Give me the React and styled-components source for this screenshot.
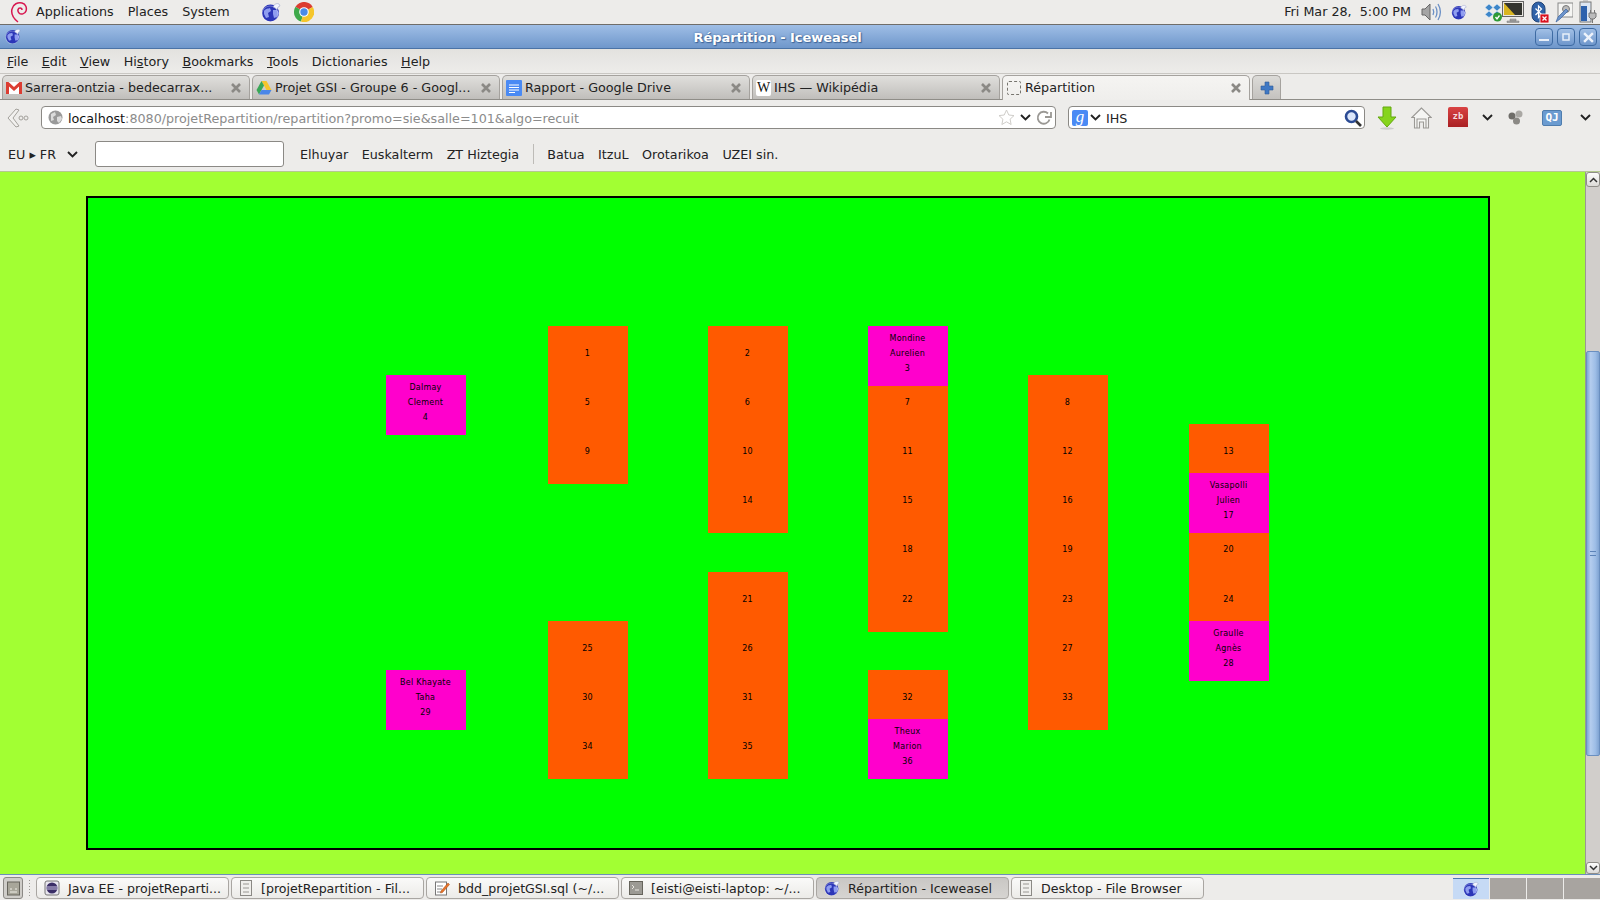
import React from "react";
import styled, { createGlobalStyle } from "styled-components";

const Global = createGlobalStyle`
  html, body { margin: 0; padding: 0; background: #edecea; }
  body { font-family: "DejaVu Sans", "Liberation Sans", sans-serif; font-size: 12.72px; color: #1a1a1a; }
  * { box-sizing: border-box; }
`;

const Screen = styled.div`
  width: 1600px; height: 900px; display: flex; flex-direction: column; overflow: hidden;
`;

/* ---------- GNOME top panel ---------- */
const TopPanel = styled.header`
  height: 25px; flex: none; display: flex; align-items: center; background: #edecea;
  border-bottom: 1px solid #6f6d69; padding: 0 2px 1px 10px;
`;
const PanelMenu = styled.nav`
  display: flex; gap: 14px; margin-left: 8px; color: #222;
`;
const Launchers = styled.div`
  display: flex; gap: 13px; margin-left: 31px; align-items: center;
`;
const Clock = styled.div`
  margin-left: auto; white-space: pre; word-spacing: 0; color: #222;
`;
const Tray = styled.span`
  display: flex; flex: none; margin-left: ${p => p.$ml}px;
`;

/* ---------- Window title ---------- */
const TitleBar = styled.div`
  height: 24px; flex: none; position: relative; display: flex; align-items: center; justify-content: center;
  background: linear-gradient(#9fbee6, #6f97cb); border-bottom: 1px solid #4b73a6;
  padding: 1px 3px 0 6px;
`;
const TitleIcon = styled.span`
  position: absolute; left: 5px; top: 3px; display: flex;
`;
const TitleText = styled.div`
  color: #fff; font-weight: bold; font-size: 13px; letter-spacing: -0.05px; margin-left: -48px;
  text-shadow: 0 0 2px #3f6598, 1px 1px 1px #3f6598;
`;
const WinButtons = styled.div`
  position: absolute; right: 3px; top: 3px; display: flex; gap: 4px;
`;
const WinButton = styled.div`
  width: 18px; height: 18px; border: 1px solid #3e6ba3; border-radius: 4px;
  background: linear-gradient(#a2c0e6, #6e96cb); display: flex; align-items: center; justify-content: center;
`;

/* ---------- Menu bar ---------- */
const MenuBar = styled.nav`
  height: 24px; flex: none; display: flex; align-items: center; gap: 13.5px; padding: 0 0 0 7px;
  background: linear-gradient(#e3e2df, #edecea); color: #222;
`;
const Key = styled.span` text-decoration: underline; `;

/* ---------- Tabs ---------- */
const TabStrip = styled.div`
  height: 27px; flex: none; display: flex; align-items: flex-end; gap: 2px; padding-left: 2px;
  background: #edecea; border-top: 1px solid #c9c7c3; border-bottom: 1px solid #8f8d88;
`;
const Tab = styled.div`
  width: 248px; display: flex; align-items: center; gap: 3px; padding: 0 8px ${p => (p.$active ? "1px" : "0")} 3px;
  border: 1px solid #a5a29e; border-bottom: none; border-radius: 5px 5px 0 0; white-space: nowrap;
  color: #222; margin-bottom: ${p => (p.$active ? "-1px" : "0")};
  height: ${p => (p.$active ? "25px" : "24px")};
  background: ${p => (p.$active ? "linear-gradient(#f5f4f2, #efeeec)" : "linear-gradient(#e0dfdc, #c0bebb)")};
`;
const TabLabel = styled.span` flex: 1; overflow: hidden; `;
const NewTab = styled.div`
  width: 29px; height: 24px; display: flex; align-items: center; justify-content: center;
  border: 1px solid #a5a29e; border-bottom: none; border-radius: 5px 5px 0 0;
  background: linear-gradient(#dcdbd8, #c4c2bf);
`;

/* ---------- Navigation ---------- */
const NavBar = styled.div`
  height: 33px; flex: none; display: flex; align-items: center; background: #edecea; padding: 2px 0 0 7px;
`;
const UrlBox = styled.div`
  width: 1015px; height: 23px; margin-left: 12px; display: flex; align-items: center; padding: 0 3px 0 6px;
  background: #fff; border: 1px solid #8b8985; border-radius: 4px; gap: 5px;
`;
const UrlText = styled.div` flex: 1; color: #111; white-space: nowrap; padding-top: 2px; `;
const UrlRest = styled.span` color: #8b8b8b; `;
const SearchBox = styled.div`
  width: 297px; height: 23px; margin-left: 12px; display: flex; align-items: center; padding: 0 2px 0 3px;
  background: #fff; border: 1px solid #8b8985; border-radius: 4px;
`;
const SearchText = styled.div` flex: 1; margin-left: 5px; color: #222; padding-top: 2px; `;
const NavIcon = styled.span`
  display: flex; flex: none; margin-left: ${p => p.$ml}px;
`;

/* ---------- Bookmarks ---------- */
const BookmarkBar = styled.div`
  height: 39px; flex: none; display: flex; align-items: center; gap: 13.5px; padding: 3px 0 0 8px;
  background: #edecea; color: #222; border-bottom: 1px solid #b4c98f;
`;
const LangPick = styled.div` display: flex; align-items: center; width: 73.5px; gap: 11px; white-space: pre; padding-top: 2px; `;
const QuickInput = styled.div`
  width: 189px; height: 26px; margin-right: 2.500px; background: #fff; border: 1px solid #8b8985; border-radius: 3px;
`;
const Bookmark = styled.span` padding-top: 2px; `;
const Separator = styled.div` width: 1px; height: 20px; background: #bdbbb7; `;

/* ---------- Page ---------- */
const PageRow = styled.main` flex: 1; min-height: 0; display: flex; background: #a2ff33; `;
const Page = styled.div` flex: 1; padding: 24px 0 0 86px; `;
const Room = styled.section`
  position: relative; width: 1404px; height: 654px; background: #00ff00; border: 2px solid #000;
`;
const Seat = styled.div`
  position: absolute; width: 80px; height: 60px; left: ${p => p.$x - 88}px; top: ${p => 128 + p.$row * 49.1}px;
  z-index: ${p => (p.$taken ? 2 : 1)};
  background: ${p => (p.$taken ? "#ff00cc" : "#ff5a00")};
  padding: ${p => (p.$taken ? 5 : 20)}px 1px 0 0;
  font-size: 8px; line-height: 15px; text-align: center; color: #000; letter-spacing: 0.25px;
`;
const SeatLine = styled.div` white-space: nowrap; `;

const ScrollBar = styled.aside`
  width: 15px; flex: none; display: flex; flex-direction: column; background: #d1cecb;
  border-left: 1px solid #9a9894;
`;
const ScrollEnd = styled.div`
  height: ${p => p.$h}px; flex: none; background: linear-gradient(#fdfdfc, #dcdad7); border: 1px solid #8f8d88;
  border-radius: 3px; display: flex; align-items: center; justify-content: center;
`;
const Track = styled.div` flex: 1; padding-top: 164px; padding-bottom: 106px; display: flex; `;
const Thumb = styled.div`
  flex: 1; background: linear-gradient(90deg, #7fa6d8, #b4cdee 30%, #9dbde6 70%, #7fa3d2);
  border: 1px solid #6a8fc0; border-radius: 2px; display: flex; align-items: center; justify-content: center;
`;
const Grip = styled.div` width: 6px; height: 5px; border-top: 1px solid #5c83b8; border-bottom: 1px solid #5c83b8; `;

/* ---------- Task bar ---------- */
const TaskBar = styled.footer`
  height: 26px; flex: none; display: flex; align-items: center; background: #edecea;
  border-top: 1px solid #6d8fb9; padding: 1px 0 0 3px; position: relative;
`;
const ShowDesktop = styled.div`
  width: 20px; height: 22px; border: 1px solid #8b8985; border-radius: 3px; background: #cfcdc9;
  display: flex; align-items: center; justify-content: center;
`;
const Dots = styled.div`
  width: 3px; height: 18px; margin: 0 5px 0 5px;
  background-image: radial-gradient(#9a9894 1px, transparent 1px); background-size: 3px 3px;
`;
const TaskList = styled.div` display: flex; gap: 2px; `;
const Task = styled.div`
  width: 193px; height: 22px; display: flex; align-items: center; gap: 8px; padding-left: 7px; white-space: nowrap;
  border: 1px solid #a9a6a2; border-radius: 4px; color: #222; font-size: 12.6px;
  background: ${p => (p.$active ? "linear-gradient(#c9c7c4, #d6d4d1)" : "linear-gradient(#fafaf9, #ecebe8)")};
`;
const Pager = styled.div`
  margin-left: auto; display: flex; height: 21px; gap: 1px; background: #edecea;
`;
const PagerCell = styled.div`
  width: 36px; display: flex; align-items: center; justify-content: center;
  background: ${p => (p.$active ? "#c6daf5" : "#a8a4a0")};
  border-top: ${p => (p.$active ? "1px solid #4e79b0" : "none")};
`;

/* ---------- Drawn icons ---------- */
const Swirl = () => (
  <svg width="18" height="24" viewBox="0 0 18 24" fill="none" stroke="#d7174f" strokeWidth="1.5">
    <path d="M8 22C3 18 1 13 2 9 3 4 8 2 12 3c4 1 5 5 4 8-1 3-5 4-7 2-2-2-1-5 1-5 1.500 0 2 1 2 2" />
  </svg>
);
const Globe = ({ s = 20 }) => (
  <svg width={s} height={s} viewBox="0 0 20 20">
    <circle cx="9.500" cy="11" r="8.500" fill="#2c36b8" />
    <path d="M3 9c2-3 4-2 6-3l1 3-3 2 1 4-3 1-2-4zM12 8l4 0 2 3-2 4-3 1-1-4z" fill="#8f9df0" />
    <circle cx="9" cy="12" r="8" fill="none" stroke="#fff" strokeOpacity=".3" />
    <path d="M12 5c1-3 4-4 6-3l1 2-2 1-1 3c-1-2-2-2-4-3z" fill="#f3f5ff" stroke="#8a94c0" strokeWidth=".5" />
  </svg>
);
const Chrome = () => (
  <svg width="20" height="20" viewBox="0 0 20 20">
    <path d="M10 10 18.700 5A10 10 0 0 0 1.500 4.700z" fill="#dc3c30" />
    <path d="M10 10 1.500 4.700A10 10 0 0 0 7 19.600z" fill="#3ea94a" />
    <path d="M10 10 7 19.600A10 10 0 0 0 18.700 5z" fill="#f5c62c" />
    <circle cx="10" cy="10" r="4.800" fill="#fff" />
    <circle cx="10" cy="10" r="3.700" fill="#4a8be8" />
  </svg>
);
const Speaker = () => (
  <svg width="21" height="20" viewBox="0 0 21 20" fill="none">
    <path d="M1 7h3l5-5v16l-5-5H1z" fill="#a5a5a5" stroke="#666" />
    <path d="M12 7c1 2 1 4 0 6" stroke="#6a8fc5" strokeWidth="1.300" />
    <path d="M14.500 4.500c2 3 2 8 0 11" stroke="#6a8fc5" strokeWidth="1.300" />
    <path d="M17 2c3 5 3 11 0 16" stroke="#6a8fc5" strokeWidth="1.300" />
  </svg>
);
const Dropbox = () => (
  <svg width="18" height="20" viewBox="0 0 18 20">
    <path d="M5 2 1 5.500 5 9 1 12.500l4 3 4-3 4 3 4-3L13 9l4-3.500L13 2 9 5.500zM5 9l4-3.500L13 9l-4 3.500z" fill="#3d86c9" stroke="#dbe9f5" strokeWidth=".6" />
    <circle cx="13.500" cy="15" r="4.500" fill="#2f9a35" />
    <path d="M11.500 15l1.500 2 2.500-3.500" stroke="#fff" strokeWidth="1.300" fill="none" />
  </svg>
);
const Monitor = () => (
  <svg width="22" height="24" viewBox="0 0 22 24">
    <rect x="0.500" y="1.500" width="21" height="15" fill="#e8e6e1" stroke="#666" />
    <rect x="2" y="3" width="18" height="12" fill="#33342f" />
    <path d="M2 3l11 12H2z" fill="#d9b520" />
    <path d="M8 19h6v2H8zM5 21h12v1.500H5z" fill="#aaa" stroke="#777" strokeWidth=".5" />
  </svg>
);
const Bluetooth = () => (
  <svg width="18" height="24" viewBox="0 0 18 24">
    <rect x="1" y="2" width="13" height="20" rx="6.500" fill="#2f62a8" stroke="#1f4276" />
    <path d="M4.500 8.500l6 6-3 3V6l3 3-6 6" fill="none" stroke="#fff" strokeWidth="1.200" />
    <rect x="9" y="14" width="9" height="9" fill="#d9121f" stroke="#fff" strokeWidth=".8" />
    <path d="M11.500 16.500l4 4m0-4-4 4" stroke="#fff" strokeWidth="1.300" />
  </svg>
);
const PenTablet = () => (
  <svg width="18" height="24" viewBox="0 0 18 24">
    <rect x="3" y="3" width="15" height="14" fill="#f5f5f3" stroke="#888" />
    <circle cx="11" cy="9" r="3.500" fill="#bbb" stroke="#777" />
    <path d="M1 22l2-5L11 9l2 2-8 8z" fill="#6d94cc" stroke="#3b649e" strokeWidth=".7" />
  </svg>
);
const Battery = () => (
  <svg width="20" height="24" viewBox="0 0 20 24">
    <rect x="2" y="2" width="11" height="20" fill="#dce6f3" stroke="#777" />
    <rect x="5" y="0.500" width="5" height="2" fill="#aaa" />
    <rect x="3" y="6" width="6" height="15" fill="#2e62ad" />
    <path d="M11 13h7v4l-2 2h-3l-2-2zM12.500 10v3M16.500 10v3M14.500 19v4" fill="#bbb" stroke="#777" />
  </svg>
);
const XMark = ({ s = 10, c = "#8b8985", w = 2.6 }) => (
  <svg width={s} height={s} viewBox="0 0 10 10"><path d="M1 1l8 8M9 1l-8 8" stroke={c} strokeWidth={w} /></svg>
);
const Gmail = () => (
  <svg width="16" height="16" viewBox="0 0 16 16">
    <rect y="2" width="16" height="12" fill="#fff" />
    <path d="M0 2h2.500L8 7l5.500-5H16v12h-3V6.500L8 11 3 6.500V14H0z" fill="#dc3d32" />
  </svg>
);
const Drive = () => (
  <svg width="16" height="16" viewBox="0 0 16 16">
    <path d="M5.500 1h5l5 9h-5z" fill="#f7c52c" />
    <path d="M5.500 1 .5 10l2.500 4.500 5-9z" fill="#3aa757" />
    <path d="M5.500 10h10L13 14.500H3z" fill="#4a86e8" />
  </svg>
);
const Docs = () => (
  <svg width="16" height="16" viewBox="0 0 16 16">
    <rect width="16" height="16" fill="#4a8af4" rx="1" />
    <path d="M3 5h10M3 7.500h10M3 10h10M3 12.500h6" stroke="#fff" />
  </svg>
);
const WikiW = styled.span`
  width: 15px; height: 16px; flex: none; background: #fff; border-radius: 2px; color: #111; text-align: center;
  font: 14px/16px "Liberation Serif", serif;
`;
const BlankFav = styled.span`
  width: 14px; height: 14px; flex: none; margin: 0 1px; border: 1px dashed #77756f; border-radius: 2px;
`;
const Plus = () => (
  <svg width="14" height="14" viewBox="0 0 14 14"><path d="M5 1h4v4h4v4H9v4H5V9H1V5h4z" fill="#3f78c4" stroke="#2f5c99" strokeWidth=".6" /></svg>
);
const Back = () => (
  <svg width="22" height="22" viewBox="0 0 22 22" fill="#f2f1ef" stroke="#a3a19c">
    <path d="M9 2 1 11l8 9 3-1-6-8 6-8z" />
    <circle cx="14" cy="11" r="2" fill="none" />
    <circle cx="19" cy="11" r="2" fill="none" />
  </svg>
);
const GlobeGrey = () => (
  <svg width="15" height="15" viewBox="0 0 15 15">
    <circle cx="7.500" cy="7.500" r="7" fill="#9a9a9a" />
    <path d="M3 4l4-2 1 3-3 2 1 3-3 1zM9 7l4-1 1 3-3 4-2-2z" fill="#dcdcdc" />
  </svg>
);
const Star = () => (
  <svg width="17" height="17" viewBox="0 0 17 17"><path d="M8.500 1l2.300 5 5.200.6-3.900 3.600 1 5.300-4.600-2.700-4.600 2.700 1-5.300L1 6.600 6.200 6z" fill="#fff" stroke="#cfcdc9" /></svg>
);
const Chevron = ({ c = "#222" }) => (
  <svg width="11" height="7" viewBox="0 0 11 7"><path d="M1 1l4.500 4.500L10 1" fill="none" stroke={c} strokeWidth="1.900" /></svg>
);
const Reload = () => (
  <svg width="16" height="16" viewBox="0 0 16 16" fill="none" stroke="#9a9894" strokeWidth="1.800"><path d="M13.500 9.500A6 6 0 1 1 12 3.500M9 7h6V2" /></svg>
);
const GoogleG = styled.span`
  width: 16px; height: 16px; flex: none; background: #4a8af4; color: #fff; border-radius: 2px; text-align: center;
  font: italic 17px/14px "Liberation Serif", serif;
`;
const SearchGlass = () => (
  <svg width="18" height="18" viewBox="0 0 18 18" fill="none">
    <circle cx="7.500" cy="7.500" r="5.500" stroke="#2b4b94" strokeWidth="2.600" fill="#dbe6fa" />
    <path d="M12 12l5 5" stroke="#333" strokeWidth="2.600" />
  </svg>
);
const DownArrow = () => (
  <svg width="20" height="24" viewBox="0 0 20 24">
    <path d="M6 1h8v10h5L10 21 1 11h5z" fill="#86d41c" stroke="#63a80f" />
    <ellipse cx="10" cy="22.500" rx="7" ry="1.200" fill="#ccc" />
  </svg>
);
const Home = () => (
  <svg width="21" height="22" viewBox="0 0 21 22" fill="#f5f5f3" stroke="#9b9995" strokeWidth="1.100">
    <path d="M10.500 1 .8 10.500h2.700V21h5v-6h4v6h5V10.500h2.700z" />
    <path d="M6 21v-9h9v9" fill="none" />
  </svg>
);
const ZbBook = styled.span`
  width: 20px; height: 22px; flex: none; border-radius: 2px; text-align: center; color: #f6dcdc;
  background: linear-gradient(#d94343, #a91f22); border-bottom: 2px solid #efe6e6;
  font: bold 9px/18px "DejaVu Sans Mono", monospace;
`;
const Blobs = () => (
  <svg width="15" height="15" viewBox="0 0 15 15">
    <circle cx="4" cy="6" r="3.500" fill="#6f6d69" /><circle cx="11" cy="4" r="3.500" fill="#aaa8a4" /><circle cx="8.500" cy="11" r="3.500" fill="#8b8985" />
  </svg>
);
const QjBadge = styled.span`
  width: 20px; height: 16px; flex: none; background: #6b9bd0; border: 1px solid #4f7dae; border-radius: 2px;
  color: #fff; text-align: center; font: bold 11px/14px "DejaVu Sans Mono", monospace;
`;
const FolderIcon = () => (
  <svg width="13" height="16" viewBox="0 0 13 16"><rect x=".5" y="2" width="12" height="13" fill="#a8a69a" stroke="#66645c" /><path d="M3 9h2M8 9h2M3 12h7" stroke="#f0efe8" /></svg>
);
const EclipseIcon = () => (
  <svg width="16" height="16" viewBox="0 0 16 16">
    <rect x="1" y="1" width="14" height="14" rx="2" fill="#e8e6ee" stroke="#777" />
    <circle cx="8" cy="8" r="5.500" fill="#3a2e66" /><path d="M2.500 7h11M2.500 9h11" stroke="#cfc8e6" />
  </svg>
);
const FileBrowser = () => (
  <svg width="14" height="16" viewBox="0 0 14 16"><rect x="1.500" y=".5" width="11" height="15" fill="#f0efec" stroke="#8b8985" /><path d="M4 4h6M4 8h6M4 12h6" stroke="#9a9894" /></svg>
);
const Notepad = () => (
  <svg width="16" height="16" viewBox="0 0 16 16"><rect x="1.500" y="2" width="11" height="13" fill="#fff" stroke="#777" /><path d="M3 6h6M3 9h5M3 12h4" stroke="#888" /><path d="M7 11l7-8 1.500 1.500-7 8-2 .5z" fill="#e8742a" stroke="#a54a12" strokeWidth=".5" /></svg>
);
const Terminal = () => (
  <svg width="14" height="16" viewBox="0 0 14 16"><rect x=".5" y="1.500" width="13" height="13" fill="#9c9a94" stroke="#66645c" /><path d="M3 5l2 2-2 2M6 10h4" stroke="#e8e6e0" fill="none" /></svg>
);

const menus = [
  ["", "F", "ile"], ["", "E", "dit"], ["", "V", "iew"], ["Hi", "s", "tory"],
  ["", "B", "ookmarks"], ["", "T", "ools"], ["Dictionaries", "", ""], ["", "H", "elp"],
];
const tabs = [
  [<Gmail key="i" />, "Sarrera-ontzia - bedecarrax..."],
  [<Drive key="i" />, "Projet GSI - Groupe 6 - Googl..."],
  [<Docs key="i" />, "Rapport - Google Drive"],
  [<WikiW key="i">W</WikiW>, "IHS — Wikipédia"],
  [<BlankFav key="i" />, "Répartition", true],
];
const tasks = [
  [<EclipseIcon key="i" />, "Java EE - projetReparti..."],
  [<FileBrowser key="i" />, "[projetRepartition - Fil..."],
  [<Notepad key="i" />, "bdd_projetGSI.sql (~/..."],
  [<Terminal key="i" />, "[eisti@eisti-laptop: ~/..."],
  [<Globe key="i" s={16} />, "Répartition - Iceweasel", true],
  [<FileBrowser key="i" />, "Desktop - File Browser"],
];
const cols = [386, 548, 708, 868, 1028, 1189];
const seats = [
  [0, 1, 4, "Dalmay", "Clement"], [0, 7, 29, "Bel Khayate", "Taha"],
  [1, 0, 1], [1, 1, 5], [1, 2, 9], [1, 6, 25], [1, 7, 30], [1, 8, 34],
  [2, 0, 2], [2, 1, 6], [2, 2, 10], [2, 3, 14], [2, 5, 21], [2, 6, 26], [2, 7, 31], [2, 8, 35],
  [3, 0, 3, "Mondine", "Aurelien"], [3, 1, 7], [3, 2, 11], [3, 3, 15], [3, 4, 18], [3, 5, 22], [3, 7, 32], [3, 8, 36, "Theux", "Marion"],
  [4, 1, 8], [4, 2, 12], [4, 3, 16], [4, 4, 19], [4, 5, 23], [4, 6, 27], [4, 7, 33],
  [5, 2, 13], [5, 3, 17, "Vasapolli", "Julien"], [5, 4, 20], [5, 5, 24], [5, 6, 28, "Graulle", "Agnès"],
];

export default function App() {
  return (
    <Screen>
      <Global />
      <TopPanel>
        <Swirl />
        <PanelMenu><span>Applications</span><span>Places</span><span>System</span></PanelMenu>
        <Launchers><Globe /><Chrome /></Launchers>
        <Clock>Fri Mar 28,  5:00 PM</Clock>
        <Tray $ml={10}><Speaker /></Tray>
        <Tray $ml={9}><Globe s={16} /></Tray>
        <Tray $ml={17}><Dropbox /></Tray>
        <Tray $ml={0}><Monitor /></Tray>
        <Tray $ml={7}><Bluetooth /></Tray>
        <Tray $ml={6}><PenTablet /></Tray>
        <Tray $ml={5}><Battery /></Tray>
      </TopPanel>

      <TitleBar>
        <TitleIcon><Globe s={16} /></TitleIcon>
        <TitleText>Répartition - Iceweasel</TitleText>
        <WinButtons>
          <WinButton><svg width="10" height="10" viewBox="0 0 10 10"><path d="M0 8h10" stroke="#e8eff9" strokeWidth="2" /></svg></WinButton>
          <WinButton><svg width="10" height="10" viewBox="0 0 10 10"><rect x="2" y="2" width="6" height="6" fill="none" stroke="#e8eff9" strokeWidth="1.500" /></svg></WinButton>
          <WinButton><XMark s={11} c="#eef3fb" w={2.2} /></WinButton>
        </WinButtons>
      </TitleBar>

      <MenuBar>
        {menus.map(([a, k, b]) => <span key={a + k + b}>{a}<Key>{k}</Key>{b}</span>)}
      </MenuBar>

      <TabStrip>
        {tabs.map(([icon, label, active]) => (
          <Tab key={label} $active={active}>
            {icon}
            <TabLabel>{label}</TabLabel>
            <XMark />
          </Tab>
        ))}
        <NewTab><Plus /></NewTab>
      </TabStrip>

      <NavBar>
        <Back />
        <UrlBox>
          <GlobeGrey />
          <UrlText>localhost<UrlRest>:8080/projetRepartition/repartition?promo=sie&amp;salle=101&amp;algo=recuit</UrlRest></UrlText>
          <Star />
          <Chevron />
          <Reload />
        </UrlBox>
        <SearchBox>
          <GoogleG>g</GoogleG>
          <NavIcon $ml={2}><Chevron /></NavIcon>
          <SearchText>IHS</SearchText>
          <SearchGlass />
        </SearchBox>
        <NavIcon $ml={12}><DownArrow /></NavIcon>
        <NavIcon $ml={14}><Home /></NavIcon>
        <NavIcon $ml={16}><ZbBook>zb</ZbBook></NavIcon>
        <NavIcon $ml={14}><Chevron /></NavIcon>
        <NavIcon $ml={15}><Blobs /></NavIcon>
        <NavIcon $ml={19}><QjBadge>QJ</QjBadge></NavIcon>
        <NavIcon $ml={18}><Chevron /></NavIcon>
      </NavBar>

      <BookmarkBar>
        <LangPick>EU ▸ FR<Chevron /></LangPick>
        <QuickInput />
        <Bookmark>Elhuyar</Bookmark>
        <Bookmark>Euskalterm</Bookmark>
        <Bookmark>ZT Hiztegia</Bookmark>
        <Separator />
        <Bookmark>Batua</Bookmark>
        <Bookmark>ItzuL</Bookmark>
        <Bookmark>Orotarikoa</Bookmark>
        <Bookmark>UZEI sin.</Bookmark>
      </BookmarkBar>

      <PageRow>
        <Page>
          <Room>
            {seats.map(([c, r, n, first, last]) => (
              <Seat key={n} $x={cols[c]} $row={r} $taken={!!first}>
                {first && <SeatLine>{first}</SeatLine>}
                {last && <SeatLine>{last}</SeatLine>}
                <SeatLine>{n}</SeatLine>
              </Seat>
            ))}
          </Room>
        </Page>
        <ScrollBar>
          <ScrollEnd $h={15}><svg width="9" height="6" viewBox="0 0 9 6"><path d="M1 5l3.500-3.500L8 5" fill="none" stroke="#333" strokeWidth="1.500" /></svg></ScrollEnd>
          <Track><Thumb><Grip /></Thumb></Track>
          <ScrollEnd $h={12}><svg width="9" height="6" viewBox="0 0 9 6"><path d="M1 1l3.500 3.500L8 1" fill="none" stroke="#333" strokeWidth="1.500" /></svg></ScrollEnd>
        </ScrollBar>
      </PageRow>

      <TaskBar>
        <ShowDesktop><FolderIcon /></ShowDesktop>
        <Dots />
        <TaskList>
          {tasks.map(([icon, label, active]) => (
            <Task key={label} $active={active}>{icon}<span>{label}</span></Task>
          ))}
        </TaskList>
        <Pager>
          <PagerCell $active><Globe s={16} /></PagerCell>
          <PagerCell /><PagerCell /><PagerCell />
        </Pager>
      </TaskBar>
    </Screen>
  );
}
